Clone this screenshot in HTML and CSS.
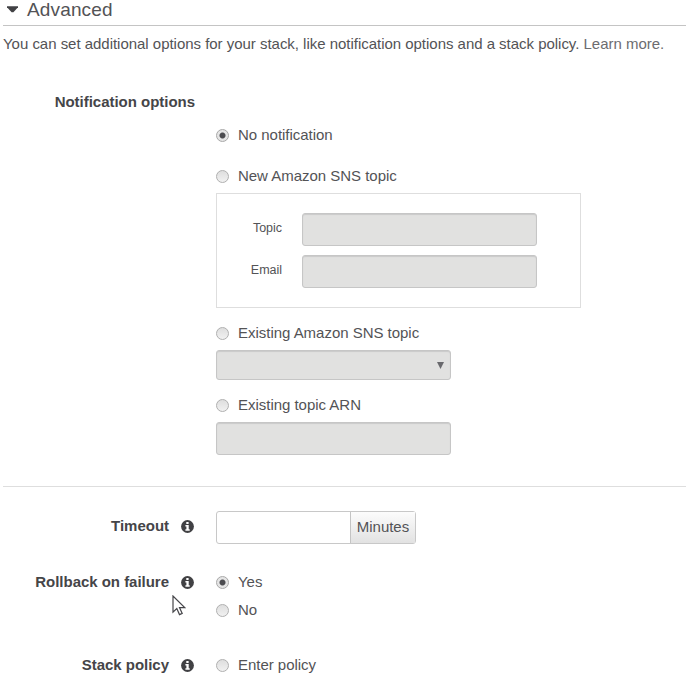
FILE: index.html
```html
<!DOCTYPE html>
<html lang="en">
<head>
<meta charset="utf-8">
<title>Advanced options</title>
<link rel="stylesheet" href="styles.css">
</head>
<body>
<svg class="defs" width="0" height="0" aria-hidden="true">
  <symbol id="info" viewBox="0 0 13 13">
    <circle cx="6.5" cy="6.5" r="6.4" fill="#414144"/>
    <path fill="#fff" d="M5.3 2h2.3v2H5.3zM4.4 5.1h3.3v4.1h1v1.5H4.4V9.2h1V6.6h-1z"/>
  </symbol>
</svg>
<header class="section-head">
  <svg class="caret" viewBox="0 0 12 7"><path d="M0 0h12v1L7 6.5H5L0 1z" fill="#414144"/></svg>
  <h1>Advanced</h1>
</header>
<p class="intro"><span>You can set additional options for your stack, like notification options and a stack policy.</span> <a class="learn">Learn more.</a></p>
<main>
  <section class="notifications">
    <div class="label">Notification options</div>
    <div class="fields">
      <label class="option none"><i class="radio on"></i><span>No notification</span></label>
      <label class="option"><i class="radio"></i><span>New Amazon SNS topic</span></label>
      <div class="topic-box">
        <span class="small">Topic</span><div class="input"></div>
        <span class="small">Email</span><div class="input"></div>
      </div>
      <label class="option"><i class="radio"></i><span>Existing Amazon SNS topic</span></label>
      <div class="input select"><svg class="arrow" viewBox="0 0 7 7"><path d="M0 0h7L3.5 7z" fill="#69696d"/></svg></div>
      <label class="option arn"><i class="radio"></i><span>Existing topic ARN</span></label>
      <div class="input"></div>
    </div>
  </section>
  <section class="row timeout">
    <div class="label"><span>Timeout</span><svg class="info"><use href="#info"/></svg></div>
    <div class="group"><div class="minutes-input"></div><div class="addon">Minutes</div></div>
  </section>
  <section class="row rollback">
    <div class="label"><span>Rollback on failure</span><svg class="info"><use href="#info"/></svg></div>
    <div class="choices">
      <label class="option"><i class="radio on"></i><span>Yes</span></label>
      <label class="option"><i class="radio"></i><span>No</span></label>
    </div>
  </section>
  <section class="row">
    <div class="label"><span>Stack policy</span><svg class="info"><use href="#info"/></svg></div>
    <label class="option"><i class="radio"></i><span>Enter policy</span></label>
  </section>
</main>
<svg class="cursor" viewBox="0 0 14 21"><path d="M1 1v16.2l3.8-3.6 2.7 6 2.7-1.2-2.7-5.8h5.2z" fill="#fff" stroke="#46464a" stroke-width="1.2"/></svg>
</body>
</html>
```

FILE: styles.css
```css
* { box-sizing: border-box; }
body {
  position: relative;
  width: 690px;
  height: 677px;
  margin: 0;
  overflow: hidden;
  background: #fff;
  color: #535356;
  font: 15px/20px "Liberation Sans", Arial, sans-serif;
  letter-spacing: -0.025px;
}
.defs { position: absolute; }
.section-head {
  display: flex;
  align-items: center;
  height: 26px;
  margin: 0 4px 0 3px;
  padding: 0 0 6px 4px;
  border-bottom: 1px solid #c4c4c4;
}
.caret { width: 11px; height: 7px; margin-right: 9px; }
h1 { margin: 0; font-size: 19px; font-weight: 400; line-height: 20px; letter-spacing: 0.15px; }
.intro { margin: 8px 0 0 3px; white-space: nowrap; }
.learn { color: #6c6c70; }
.notifications {
  display: grid;
  grid-template-columns: 192px 1fr;
  column-gap: 21px;
  height: 433px;
  margin: 0 4px 0 3px;
  padding-top: 38px;
  border-bottom: 1px solid #dedede;
}
.label {
  display: flex;
  align-items: center;
  justify-content: flex-end;
  gap: 12px;
  height: 20px;
  color: #454548;
  font-weight: 700;
  white-space: nowrap;
}
.info { width: 13px; height: 13px; }
.fields { padding-top: 33px; }
.option { display: flex; align-items: center; height: 20px; gap: 9px; white-space: nowrap; }
.none { margin-bottom: 21px; }
.radio {
  width: 13px;
  height: 13px;
  border: 1px solid #b0b0b0;
  border-radius: 50%;
  background: linear-gradient(#dedede, #f1f1f1);
}
.radio.on { background: radial-gradient(circle, #4c4c50 0 2.5px, #e5e5e5 3.5px); border-color: #a8a8a8; }
.topic-box {
  display: grid;
  grid-template-columns: 65px 235px;
  grid-auto-rows: 33px;
  column-gap: 20px;
  row-gap: 9px;
  width: 365px;
  height: 115px;
  margin: 7px 0 15px;
  padding-top: 19px;
  border: 1px solid #dedede;
}
.small { padding-top: 5px; font-size: 12.5px; text-align: right; }
.input {
  width: 235px;
  height: 33px;
  border: 1px solid #c6c6c6;
  border-radius: 3px;
  background: #e1e1e0;
  box-shadow: inset 0 1px 1px #cacaca;
}
.select {
  display: flex;
  align-items: center;
  justify-content: flex-end;
  height: 30px;
  margin: 7px 0 15px;
  padding-right: 6px;
}
.arrow { width: 7px; height: 7px; }
.arn { margin-bottom: 7px; }
.row { display: grid; grid-template-columns: 194px 1fr; column-gap: 22px; }
.timeout { margin-top: 24px; height: 33px; }
.timeout .label { margin-top: 5px; }
.group { display: flex; width: 200px; height: 33px; border: 1px solid #c8c8c8; border-radius: 3px; }
.minutes-input { flex: 1; }
.addon {
  width: 65px;
  border-left: 1px solid #c4c4c4;
  background: linear-gradient(#fcfcfc, #e2e2e2);
  text-align: center;
  line-height: 30px;
}
.rollback { margin: 28px 0 35px; }
.choices { display: grid; gap: 8px; }
.cursor { position: absolute; left: 172px; top: 595px; width: 14px; height: 21px; }
```
